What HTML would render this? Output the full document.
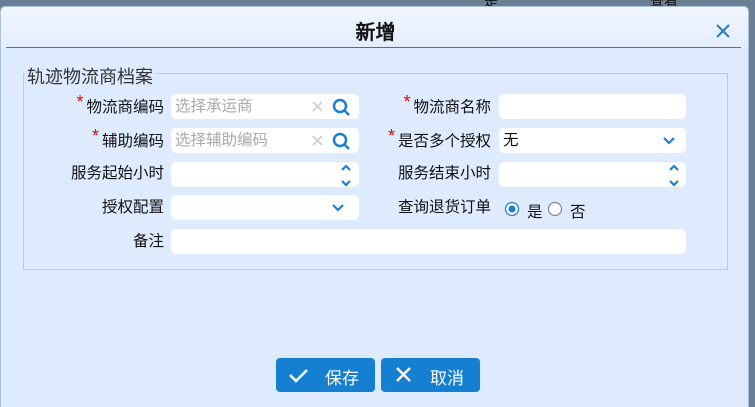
<!DOCTYPE html><html><head><meta charset="utf-8"><style>
*{margin:0;padding:0;box-sizing:border-box}
html,body{width:755px;height:407px;overflow:hidden}
body{background:#6b7f94;font-family:"Liberation Sans","WenQuanYi Zen Hei",sans-serif;font-size:15px;color:#111;position:relative}
.dlg{position:absolute;left:0;top:6px;width:749px;height:401px;background:#deeafd;border-radius:5px 5px 0 0;border:1px solid #a9c1de;border-bottom:none}
.hd{height:41px;background:linear-gradient(#f2f6fe,#e3edfc);border-radius:5px 5px 0 0}
.title{position:absolute;left:0;width:749px;top:9px;text-align:center;font-weight:bold;font-size:20px}
.line{position:absolute;left:5px;top:40px;width:735px;height:1px;background:#2a7ac4}
.fs{position:absolute;left:22px;top:66px;width:705px;height:197px;border:1px solid #c4c8cf}
.lg{position:absolute;left:24px;top:56px;background:#deeafd;padding:0 2px;font-size:18px;color:#333}
.lbl{position:absolute;text-align:right;font-size:15.5px;line-height:25px;white-space:nowrap}
.lbl b{color:#e00;font-weight:normal;font-size:18px;position:relative;top:-4px;margin-right:3px}
.in{position:absolute;background:#fff;border-radius:5px;height:25px;font-size:15.5px;line-height:25px;padding-left:4px;color:#aaa;white-space:nowrap}
.top{position:absolute;top:-9px;color:#111;font-size:14px}
</style></head><body>
<div class="top" style="left:484px">是</div><div class="top" style="left:650px">查看</div>
<div class="dlg">
<div class="hd"></div>
<div class="title">新增</div>
<svg style="position:absolute;left:714px;top:16px" width="16" height="16"><path d="M2 2L14 14M14 2L2 14" stroke="#2a7ac4" stroke-width="2"/></svg>
<div class="line"></div>
<div class="fs"></div><div class="lg">轨迹物流商档案</div>
</div>
<div class="lbl" style="right:591px;top:94px"><b>*</b>物流商编码</div>
<div class="in" style="left:171px;top:94px;width:188px">选择承运商</div>
<div class="lbl" style="right:264px;top:94px"><b>*</b>物流商名称</div>
<div class="in" style="left:499px;top:94px;width:187px"></div>
<div class="lbl" style="right:591px;top:128px"><b>*</b>辅助编码</div>
<div class="in" style="left:171px;top:128px;width:188px">选择辅助编码</div>
<div class="lbl" style="right:264px;top:128px"><b>*</b>是否多个授权</div>
<div class="in" style="left:499px;top:128px;width:187px;color:#111">无</div>
<div class="lbl" style="right:591px;top:161px">服务起始小时</div>
<div class="in" style="left:171px;top:162px;width:188px"></div>
<div class="lbl" style="right:264px;top:161px">服务结束小时</div>
<div class="in" style="left:499px;top:162px;width:187px"></div>
<div class="lbl" style="right:591px;top:195px">授权配置</div>
<div class="in" style="left:171px;top:195px;width:188px"></div>
<div class="lbl" style="right:264px;top:195px">查询退货订单</div>
<div class="lbl" style="right:591px;top:229px">备注</div>
<div class="in" style="left:171px;top:229px;width:515px"></div>
<svg style="position:absolute;left:0;top:0" width="755" height="407">
<g stroke="#ccc" stroke-width="1.6"><path d="M313 102l9 9M322 102l-9 9M313 136l9 9M322 136l-9 9"/></g>
<g stroke="#1a7fd4" stroke-width="2.5" fill="none"><circle cx="340" cy="106" r="6"/><path d="M344 110l5 5"/><circle cx="340" cy="140" r="6"/><path d="M344 144l5 5"/></g>
<g stroke="#1a7fd4" stroke-width="2.2" fill="none"><path d="M664 138l5 5 5-5M333 205l5 5 5-5M342 170l4-4 4 4M342 181l4 4 4-4M670 170l4-4 4 4M670 181l4 4 4-4"/></g>
<circle cx="512" cy="209" r="6.5" fill="#fff" stroke="#1a7fd4" stroke-width="1.2"/><circle cx="512" cy="209" r="3.5" fill="#1a7fd4"/>
<circle cx="555" cy="209" r="6.5" fill="#fff" stroke="#888" stroke-width="1.2"/>
<rect x="276" y="358" width="99" height="34" rx="4" fill="#1580d2"/><rect x="381" y="358" width="99" height="34" rx="4" fill="#1580d2"/>
<path d="M290 375l6 6 11-11" stroke="#fff" stroke-width="2.5" fill="none"/>
<path d="M397 368l13 13M410 368l-13 13" stroke="#fff" stroke-width="2.3"/>
</svg>
<div style="position:absolute;left:527px;top:200px;font-size:15.5px">是</div>
<div style="position:absolute;left:570px;top:200px;font-size:15.5px">否</div>
<div style="position:absolute;left:325px;top:364px;color:#fff;font-size:17px">保存</div>
<div style="position:absolute;left:430px;top:364px;color:#fff;font-size:17px">取消</div>
</body></html>
